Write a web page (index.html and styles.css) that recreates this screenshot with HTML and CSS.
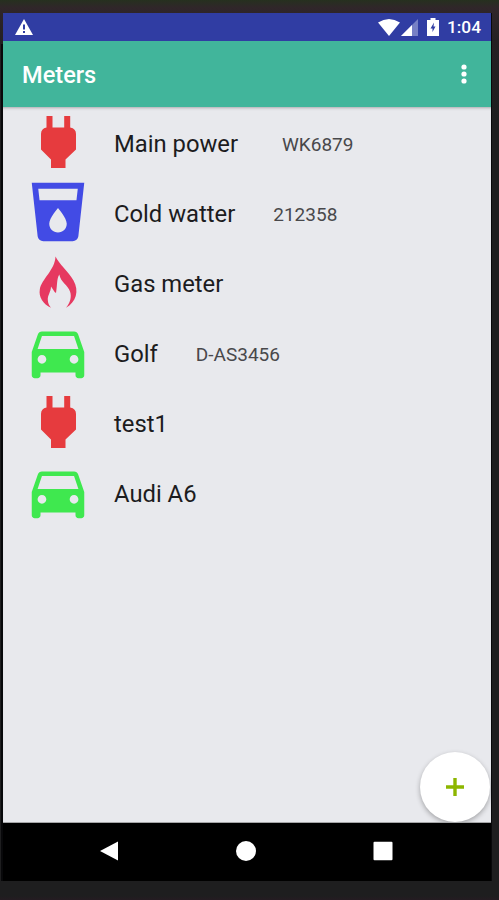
FILE: index.html
```html
<!DOCTYPE html>
<html lang="en">
<head>
    <meta charset="UTF-8">
    <meta name="viewport" content="width=device-width, initial-scale=1.0">
    <title>Meters</title>
    <link rel="stylesheet" href="styles.css">
</head>
<body>
    <!-- Shared icons -->
    <svg class="sprite">
        <symbol id="icon-plug" viewBox="0 0 70 70">
            <path d="M23.5 9h6v11.500h11.700v-11.500h6v11.500q5.800 1 5.800 6.500v15.500l-10.500 10v8.500h-14.500v-8.500l-10-10v-15.500q0-5.500 5.500-6.500z"/>
        </symbol>
        <symbol id="icon-water" viewBox="0 0 24 24">
            <path d="M3 2l2.010 18.230C5.130 21.230 5.970 22 7 22h10c1.030 0 1.870-.770 1.990-1.770L21 2H3zm9 17c-1.660 0-3-1.340-3-3 0-2 3-5.400 3-5.400s3 3.400 3 5.400c0 1.660-1.340 3-3 3zm6.330-11H5.670l-.440-4h13.550l-.450 4z"/>
        </symbol>
        <symbol id="icon-gas" viewBox="0 0 70 70">
            <path d="M32.500 9.500C36 17 45 24 50.500 33.500C56.500 44 53 55 43 60.800C47 56 49 50 47 44.500C45 38 37.500 35 36.300 27.500C33.500 32 34.500 38 33 46C31 45 30 42 28 39.500C28 45 24.500 48 24.800 53C25 56 26 58.500 28 60.800C20 57 15.500 50 16.800 42.500C18.500 32 32 23 32.500 9.500z"/>
        </symbol>
        <symbol id="icon-car" viewBox="0 0 24 24">
            <path d="M18.920 6.010C18.720 5.420 18.160 5 17.500 5h-11c-.660 0-1.210.420-1.420 1.010L3 12v8c0 .550.450 1 1 1h1c.550 0 1-.450 1-1v-1h12v1c0 .550.450 1 1 1h1c.550 0 1-.450 1-1v-8l-2.080-5.990zM6.500 16c-.830 0-1.500-.670-1.500-1.500S5.670 13 6.500 13s1.500.670 1.500 1.500S7.330 16 6.500 16zm11 0c-.830 0-1.500-.670-1.500-1.500s.670-1.500 1.500-1.500 1.500.670 1.500 1.500-.670 1.500-1.500 1.500zM5 11l1.500-4.500h11L19 11H5z"/>
        </symbol>
    </svg>

    <div class="phone">
        <div class="status-bar">
            <svg class="warning" width="18" height="16" viewBox="0 0 18 16">
                <path fill="#fff" d="M9 0L18 16H0z"/>
                <path fill="#303da3" d="M8 5.500h2v5H8zM8 12h2v2H8z"/>
            </svg>
            <svg class="wifi" width="22" height="17" viewBox="0 0 22 17">
                <path fill="#fff" d="M0 3.500Q11-3.500 22 3.500L11 17z"/>
            </svg>
            <svg class="signal" width="17" height="17" viewBox="0 0 17 17">
                <path fill="#7780c5" d="M17 0v17H0z"/>
                <path fill="#fff" d="M11 6v11H0z"/>
            </svg>
            <svg class="battery" width="12" height="18" viewBox="0 0 12 18">
                <path fill="#fff" d="M3.500 0h5v2H12v16H0V2h3.500z"/>
                <path fill="#303da3" d="M7 4.500L3.500 10.500h2v3.500L8.500 8.500H6.500z"/>
            </svg>
            <span class="time">1:04</span>
        </div>

        <header class="app-bar">
            <h1>Meters</h1>
            <button class="menu" aria-label="Menu">
                <svg width="6" height="21" viewBox="0 0 6 21" fill="#fff">
                    <circle cx="3" cy="3" r="2.600"/>
                    <circle cx="3" cy="10" r="2.600"/>
                    <circle cx="3" cy="17" r="2.600"/>
                </svg>
            </button>
        </header>

        <main class="content">
            <ul class="meters">
                <li class="meter">
                    <svg class="icon power"><use href="#icon-plug"/></svg>
                    <span class="name">Main power </span>
                    <span class="number">WK6879</span>
                </li>
                <li class="meter">
                    <svg class="icon water"><use href="#icon-water"/></svg>
                    <span class="name">Cold watter</span>
                    <span class="number">212358</span>
                </li>
                <li class="meter">
                    <svg class="icon gas"><use href="#icon-gas"/></svg>
                    <span class="name">Gas meter</span>
                </li>
                <li class="meter">
                    <svg class="icon car"><use href="#icon-car"/></svg>
                    <span class="name">Golf</span>
                    <span class="number">D-AS3456</span>
                </li>
                <li class="meter">
                    <svg class="icon power"><use href="#icon-plug"/></svg>
                    <span class="name">test1</span>
                </li>
                <li class="meter">
                    <svg class="icon car"><use href="#icon-car"/></svg>
                    <span class="name">Audi A6</span>
                </li>
            </ul>
            <button class="fab" aria-label="Add meter">
                <svg width="18" height="18" viewBox="0 0 18 18">
                    <path fill="#8db600" d="M7.300 0h3.400v7.300H18v3.400h-7.300V18H7.300v-7.300H0V7.300h7.300z"/>
                </svg>
            </button>
        </main>

        <nav class="nav-bar">
            <svg width="20" height="20" viewBox="0 0 20 20"><path d="M19 .500v19L1 10z"/></svg>
            <svg width="20" height="20" viewBox="0 0 20 20"><circle cx="10" cy="10" r="10"/></svg>
            <svg width="20" height="20" viewBox="0 0 20 20"><rect x=".500" y=".800" width="19" height="18.500" rx="1"/></svg>
        </nav>
    </div>
</body>
</html>
```

FILE: styles.css
```css
* {
    margin: 0;
    padding: 0;
    box-sizing: border-box;
    font-family: Roboto, sans-serif;
}

body {
    height: 900px;
    padding: 13px 8px 19px 3px;
    background: linear-gradient(#26301f 0, #30262a 8px, #242022 40px, #1e1e1f 120px, #1e1e1f 896px, #251c22 900px);
    overflow: hidden;
}

.sprite {
    display: none;
}

.phone {
    display: flex;
    flex-direction: column;
    width: 488px;
    height: 868px;
    background: #000;
    box-shadow: -3px 30px 0 -1px #08080a, 1px 0 0 #08080a;
    clip-path: inset(0 -1px 0 -3px);
}

.status-bar {
    display: flex;
    align-items: center;
    height: 28px;
    padding: 0 10px 0 12px;
    background: #303da3;
    color: #fff;
}

.wifi {
    margin-left: auto;
}

.signal {
    margin-left: 1px;
}

.battery {
    margin-left: 9px;
}

.time {
    margin-left: 8px;
    font-size: 17.3px;
    font-weight: 500;
    line-height: 28px;
}

.app-bar {
    display: flex;
    align-items: center;
    justify-content: space-between;
    height: 66px;
    padding: 0 24px 0 19px;
    background: #41b59b;
}

.app-bar h1 {
    padding-top: 2px;
    color: #fff;
    font-size: 23.6px;
    font-weight: 500;
}

button {
    border: none;
    background: none;
}

.menu {
    display: flex;
}

.content {
    position: relative;
    height: 716px;
    background: #e8e9ed;
    border-bottom: 1px solid #a5a6a8;
    box-shadow: inset 0 3px 3px -2px #aaa9ae;
}

.meters {
    list-style: none;
}

.meter {
    display: flex;
    align-items: center;
    height: 70px;
    padding-left: 20px;
}

.icon {
    width: 70px;
    height: 70px;
    margin-right: 21px;
}

.power {
    fill: #e63b3e;
}

.water {
    fill: #424be5;
}

.gas {
    fill: #e63960;
}

.car {
    fill: #3fe84f;
}

.name {
    padding-top: 3px;
    color: #1c1c1e;
    font-size: 23.8px;
    white-space: pre;
}

.number {
    margin-left: 38px;
    padding-top: 4px;
    color: #48484b;
    font-size: 19px;
}

.fab {
    position: absolute;
    right: 1px;
    bottom: 0;
    display: flex;
    align-items: center;
    justify-content: center;
    width: 70px;
    height: 70px;
    border-radius: 50%;
    background: #fff;
    box-shadow: 0 2px 5px rgba(0, 0, 0, 0.3);
    clip-path: inset(-8px -1px 0 -8px);
}

.nav-bar {
    display: flex;
    align-items: center;
    justify-content: space-between;
    height: 58px;
    padding: 0 98px 2px 96px;
    background: #000;
    fill: #fff;
}
```
